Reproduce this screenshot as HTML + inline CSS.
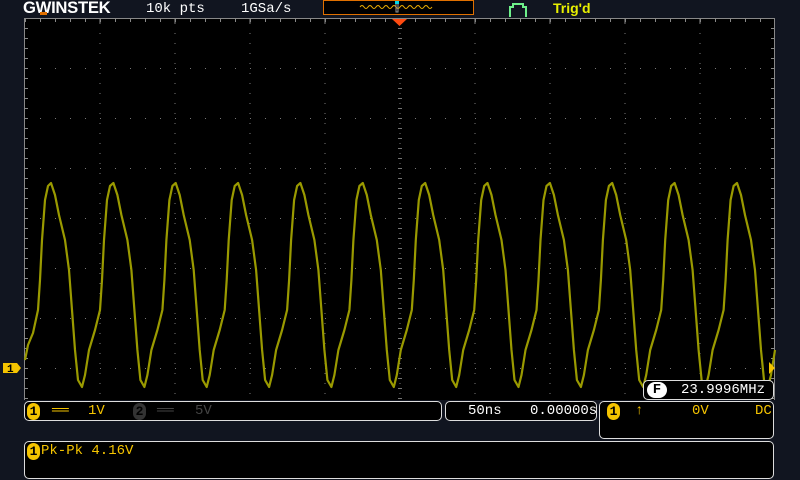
<!DOCTYPE html>
<html><head><meta charset="utf-8"><style>
body{margin:0;width:800px;height:480px;background:#111520;overflow:hidden;position:relative;font-family:"Liberation Mono",monospace}
.t{position:absolute;color:#fff;font-size:14px;line-height:16px}
.p{position:absolute;background:#000;border:1px solid #ddd;border-radius:5px;box-sizing:border-box}
.y{color:#f5c400}
.c{display:inline-block;width:13px;height:17px;border-radius:7px;background:#f5c400;color:#000;font-weight:bold;text-align:center;font-size:13px;line-height:17px}
</style></head><body>
<div class="t" style="left:23px;top:-1px;font-family:'Liberation Sans',sans-serif;font-weight:bold;font-size:17px;letter-spacing:-0.3px;line-height:18px;transform:scaleX(0.98);transform-origin:left">GWINSTEK</div>
<div style="position:absolute;left:40px;top:12px;width:7px;height:3px;background:#e07000"></div>
<div class="t" style="left:146px;top:1px">10k pts</div>
<div class="t" style="left:241px;top:1px">1GSa/s</div>
<div class="t" style="left:553px;top:0px;color:#e8f000;font-family:'Liberation Sans',sans-serif;font-weight:bold;font-size:14px">Trig'd</div>
<div style="position:absolute;left:323px;top:0;width:151px;height:15px;border:1px solid #e07000;background:#000;box-sizing:border-box"></div>
<svg style="position:absolute;left:0;top:0" width="800" height="480">
<path d="M360 7 q2 -3 4 0 q2 3 4 0 q2 -3 4 0 q2 3 4 0 q2 -3 4 0 q2 3 4 0 q2 -3 4 0 q2 3 4 0 q2 -3 4 0 q2 3 4 0 q2 -3 4 0 q2 3 4 0 q2 -3 4 0 q2 3 4 0 q2 -3 4 0 q2 3 4 0 q2 -3 4 0 q2 3 4 0" stroke="#f0b000" fill="none" stroke-width="1"/>
<rect x="396" y="3" width="2" height="9" fill="none" stroke="#999" stroke-width="1"/>
<rect x="395" y="1" width="4" height="3" fill="#00d8e8"/>
<path d="M510 17 V7 H513 V4 H523 V7 H526 V17" stroke="#6ef08a" stroke-width="2" fill="none"/>
<rect x="25" y="18" width="750" height="382" fill="#000"/>
<line x1="24.5" y1="18" x2="24.5" y2="400" stroke="#888"/>
<line x1="774.5" y1="18" x2="774.5" y2="400" stroke="#888"/>
<line x1="25" y1="18.5" x2="775" y2="18.5" stroke="#888"/>
<g id="g"></g>
<path d="M392 19 h15 l-7.5 7z" fill="#ff4a10"/>
<path id="w" fill="none" stroke="#9a9a00" stroke-width="2.2" stroke-linejoin="round"/>
<path d="M3 363 h14 l4 5 l-4 5 h-14z" fill="#f5c400"/><text x="7" y="372" font-family="Liberation Mono" font-weight="bold" font-size="11" fill="#000">1</text>
<path d="M775 368 l-6 -6 v12z" fill="#f5c400"/>
</svg>
<div class="p" style="left:643px;top:380px;width:131px;height:20px"><span style="position:absolute;left:3px;top:1px;width:20px;height:16px;border-radius:8px;background:#fff;color:#000;font-weight:bold;text-align:center;font-size:14px;line-height:16px">F</span><span class="t" style="left:37px;top:1px">23.9996MHz</span></div>
<div class="p" style="left:24px;top:401px;width:418px;height:20px">
<span class="t" style="left:2px;top:1px"><span class="c">1</span></span>
<span class="t y" style="left:27px;top:1px">══</span><span class="t y" style="left:63px;top:1px">1V</span>
<span class="t" style="left:108px;top:1px"><span class="c" style="background:#333;color:#000">2</span></span>
<span class="t" style="left:132px;top:1px;color:#444">══</span><span class="t" style="left:170px;top:1px;color:#444">5V</span></div>
<div class="p" style="left:445px;top:401px;width:152px;height:20px"><span class="t" style="left:22px;top:1px">50ns</span><span class="t" style="left:84px;top:1px">0.00000s</span></div>
<div class="p" style="left:599px;top:401px;width:175px;height:38px">
<span class="t" style="left:7px;top:1px"><span class="c">1</span></span><span class="t y" style="left:35px;top:1px">↑</span><span class="t y" style="left:92px;top:1px">0V</span><span class="t y" style="left:155px;top:1px">DC</span></div>
<div class="p" style="left:24px;top:441px;width:750px;height:38px"><span class="t" style="left:2px;top:1px"><span class="c">1</span></span><span class="t y" style="left:16px;top:1px">Pk-Pk 4.16V</span></div>
<script>
var g='';
for(var k=1;k<10;k++){var x=25+75*k;for(var y=23;y<400;y+=10){g+='<rect x="'+(x-0.5)+'" y="'+y+'" width="1" height="1" fill="#777"/>';}
 g+='<rect x="'+(x-0.5)+'" y="19" width="1" height="4" fill="#888"/>';}
for(var y=68;y<400;y+=50){for(var x=25;x<775;x+=15)g+='<rect x="'+x+'" y="'+y+'" width="1" height="1" fill="#777"/>';}
for(var x=25;x<775;x+=15)g+='<rect x="'+x+'" y="19" width="1" height="3" fill="#888"/>';
for(var y=28;y<400;y+=10)g+='<rect x="398" y="'+y+'" width="4" height="1" fill="#777"/>';
for(var y=28;y<400;y+=10){g+='<rect x="25" y="'+y+'" width="3" height="1" fill="#888"/>';g+='<rect x="771" y="'+y+'" width="3" height="1" fill="#888"/>';}
document.getElementById('g').innerHTML=g;
var s=[[0,183],[4,195],[8,215],[14,240],[18,270],[21,310],[24,350],[27,380],[31,387],[34,375],[38,350],[44,330],[49,310],[51,280],[53,240],[56,200],[59,186]];
var P=62.36,d='M25 360 L28 345 L33 333 L38 310 L40 280 L42 240 L45 200 L48 186';
for(var i=0;i<12;i++){var b=51+P*i;for(var j=0;j<s.length;j++){var x=b+s[j][0];if(x>775)break;d+=' L'+x.toFixed(1)+' '+s[j][1];}}
document.getElementById('w').setAttribute('d',d);
</script>
</body></html>
